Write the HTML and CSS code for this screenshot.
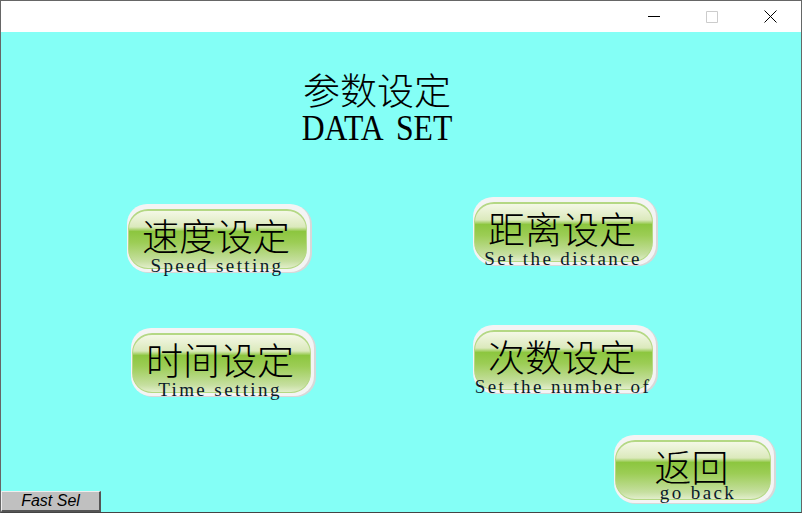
FILE: index.html
```html
<!DOCTYPE html>
<html lang="en">
<head>
    <meta charset="UTF-8">
    <meta name="viewport" content="width=device-width, initial-scale=1.0">
    <title>Data Set</title>
    <link rel="stylesheet" href="styles.css">
</head>
<body>
    <div class="window">
        <div class="titlebar">
            <div class="win-btn">
                <svg width="12" height="12" viewBox="0 0 12 12"><path d="M0 5.5H12" stroke="#000" fill="none"/></svg>
            </div>
            <div class="win-btn">
                <svg width="12" height="12" viewBox="0 0 12 12"><path d="M.5 .5H11.5V11.5H.5Z" stroke="#ccc" fill="none"/></svg>
            </div>
            <div class="win-btn">
                <svg width="13" height="13" viewBox="0 0 13 13"><path d="M.5 .5L12.5 12.5M12.5 .5L.5 12.5" stroke="#000" fill="none"/></svg>
            </div>
        </div>
        <div class="panel">
            <div class="heading">
                <div class="heading-cn">参数设定</div>
                <div class="heading-en">DATA SET</div>
            </div>

            <div class="hmi-btn speed">
                <div class="face"><span class="label">速度设定</span></div>
                <span class="sub">Speed setting</span>
            </div>
            <div class="hmi-btn distance">
                <div class="face"><span class="label">距离设定</span></div>
                <span class="sub">Set the distance</span>
            </div>
            <div class="hmi-btn time">
                <div class="face"><span class="label">时间设定</span></div>
                <span class="sub">Time setting</span>
            </div>
            <div class="hmi-btn count">
                <div class="face"><span class="label">次数设定</span></div>
                <span class="sub">Set the number of</span>
            </div>
            <div class="hmi-btn back">
                <div class="face"><span class="label">返回</span></div>
                <span class="sub">go back</span>
            </div>

            <div class="fast-sel">Fast Sel</div>
        </div>
    </div>
</body>
</html>
```

FILE: styles.css
```css
html, body {
    margin: 0;
    padding: 0;
}

.window {
    width: 802px;
    height: 513px;
    box-sizing: border-box;
    border: 1px solid #666;
    border-bottom-color: #444;
    display: flex;
    flex-direction: column;
    overflow: hidden;
}

.titlebar {
    height: 31px;
    flex: none;
    background: #fff;
    display: flex;
    justify-content: flex-end;
    padding-right: 2px;
}

.win-btn {
    width: 58px;
    height: 31px;
    display: flex;
    align-items: center;
    justify-content: center;
}

.panel {
    flex: 1;
    position: relative;
    background: #84fff6;
    color: #000;
}

.heading {
    position: absolute;
    left: 251px;
    top: 37px;
    width: 250px;
    text-align: center;
}

.heading-cn {
    font: 37px/40px "Noto Sans CJK SC", sans-serif;
    font-weight: 300;
}

.heading-en {
    font: 36px/38px "Liberation Serif", serif;
    word-spacing: 7px;
    transform: scaleX(.88);
}

.hmi-btn {
    position: absolute;
    width: 183px;
    height: 68px;
    box-sizing: border-box;
    background: #f4f4f4;
    border-radius: 20px;
    box-shadow: 2px 1px 0 #d8d8d8;
    padding: 5px 3px 3px 1px;
}

.speed { left: 126px; top: 172px; }
.distance { left: 472px; top: 165px; }
.time { left: 130px; top: 296px; }
.count { left: 472px; top: 293px; }
.back { left: 613px; top: 403px; width: 160px; }

.face {
    height: 100%;
    box-sizing: border-box;
    border: 1px solid #b4d884;
    border-top-width: 2px;
    border-radius: 20px;
    background: linear-gradient(#f4f8e6 0%, #dbe9bc 28%, #8cc63f 36%, #9ccd55 55%, #c6dfa0 88%, #e2eecb 100%);
    display: flex;
    justify-content: center;
    padding-top: 3px;
}

.label {
    font: 37px/42px "Noto Sans CJK SC", sans-serif;
    font-weight: 300;
    margin-left: -3px;
}

.sub {
    position: absolute;
    left: -3px;
    right: 0;
    bottom: -3px;
    text-align: center;
    color: #0a1a2a;
    font: 19px/18px "Liberation Serif", serif;
    letter-spacing: 2.4px;
    white-space: nowrap;
}

.time .sub { left: -5px; }
.back .sub { left: 8px; bottom: 1px; }

.fast-sel {
    position: absolute;
    left: 0;
    bottom: 0;
    width: 100px;
    height: 21px;
    box-sizing: border-box;
    background: #c0c0c0;
    border-top: 1px solid #eee;
    border-left: 1px solid #eee;
    border-right: 2px solid #555;
    border-bottom: 2px solid #555;
    text-align: center;
    font: italic 16px/18px "Liberation Sans", sans-serif;
}
```
